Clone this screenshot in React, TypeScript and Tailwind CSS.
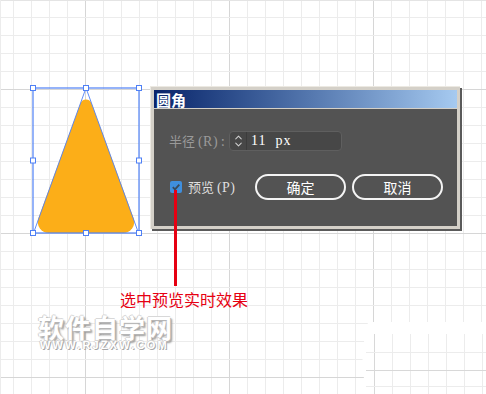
import { ChevronUp, ChevronDown } from "lucide-react";

const CJK = "font-['Noto_Sans_CJK_SC','Noto_Sans',sans-serif]";
// Latin-first stack: tighter line metrics, CJK glyphs still come from Noto
const CJK_TIGHT = "font-['Liberation_Sans','Noto_Sans_CJK_SC',sans-serif]";

// canvas grid: 18px cells, darker line every 8 cells
const xs = Array.from({ length: 28 }, (_, i) => 13.5 + i * 18);
const ys = Array.from({ length: 22 }, (_, i) => 17.5 + i * 18);

function Canvas() {
  const handles: [number, number][] = [
    [33, 88], [86, 88], [139, 88],
    [33, 160.5], [139, 160.5],
    [33, 233], [86, 233], [139, 233],
  ];
  return (
    <svg className="absolute inset-0" width={486} height={394} viewBox="0 0 486 394">
      <rect width={486} height={394} fill="#fff" />
      {xs.map((x, i) => (
        <line key={"x" + i} x1={x} y1={0} x2={x} y2={394} stroke={i % 8 === 4 ? "#d6d6d6" : "#ececec"} />
      ))}
      {ys.map((y, i) => (
        <line key={"y" + i} x1={0} y1={y} x2={486} y2={y} stroke={i % 8 === 4 ? "#d6d6d6" : "#ececec"} />
      ))}
      <line x1={0} y1={0.5} x2={486} y2={0.5} stroke="#e4e4e4" />
      <line x1={0.5} y1={0} x2={0.5} y2={394} stroke="#ececec" />

      {/* erased patch, bottom right */}
      <path d="M368 322 L486 322 L486 394 L370 394 L364 380 L362 352 Z" fill="#fff" />
      {[374.5, 392.5, 410.5, 428.5, 446.5, 464.5, 482.5].map((x, i) => (
        <line key={"px" + i} x1={x} y1={334} x2={x} y2={394} stroke={i === 0 ? "#d8d8d8" : "#ececec"} />
      ))}
      {[352.5, 370.5, 386.5].map((y, i) => (
        <line key={"py" + i} x1={366} y1={y} x2={486} y2={y} stroke={i === 1 ? "#d8d8d8" : "#ececec"} />
      ))}

      {/* rounded triangle */}
      <path
        d="M91.6 103.4 L133.6 218.3 A11 11 0 0 1 123.3 233 L48.7 233 A11 11 0 0 1 38.4 218.3 L80.4 103.4 A6 6 0 0 1 91.6 103.4 Z"
        fill="#fcae18"
      />
      <path d="M86 88 L33.5 233 M86 88 L138.5 233" stroke="#4f80f5" strokeWidth={0.9} fill="none" />
      <rect x={33} y={88} width={106} height={145} fill="none" stroke="#4f80f5" strokeWidth={1.2} />
      {handles.map(([x, y], i) => (
        <rect key={i} x={x - 2.5} y={y - 2.5} width={5} height={5} fill="#fff" stroke="#4f80f5" strokeWidth={1} />
      ))}
    </svg>
  );
}

function Dialog() {
  return (
    <div className="absolute left-[150px] top-[86px] w-[310px] h-[143px] bg-[#d4d0c8] p-[3px] flex flex-col border-t border-l border-[#ece9e2] shadow-[2px_2px_0_#5a5a5a]">
      <div className="h-[18px] shrink-0 flex items-center px-[2px] bg-gradient-to-r from-[#0a246a] to-[#a6caf0]">
        <span className={`${CJK} text-[15px] leading-none font-bold text-white`}>圆角</span>
      </div>
      <div className="mt-px flex-1 bg-[#535353] pl-[15px] pt-[22px] flex flex-col">
        <div className="flex items-center">
          <span className={`${CJK} w-[60px] text-[13px] leading-none text-[#9a9a9a]`}>
            半径 <span className="font-['Liberation_Serif',serif] text-[14px] tracking-[0.5px]">(R)</span> :
          </span>
          <div className="w-[113px] h-[20px] flex rounded-sm border border-[#5f5f5f] bg-[#474747]">
            <div className="w-[17px] flex flex-col items-center justify-center border-r border-[#3c3c3c] text-[#d0d0d0]">
              <ChevronUp size={11} strokeWidth={2.2} className="-mb-[2px]" />
              <ChevronDown size={11} strokeWidth={2.2} className="-mt-[2px]" />
            </div>
            <span className="pl-[4px] flex items-center text-[14px] leading-none text-white font-['Liberation_Serif',serif] tracking-[1px] whitespace-pre">
              11  px
            </span>
          </div>
        </div>
        <div className="mt-[23px] flex items-center">
          <div className="w-[86px] pl-px flex items-center gap-[6px]">
            <span className="w-[12px] h-[12px] rounded-[2px] bg-[#3f8fde] flex items-center justify-center">
              <svg width="10" height="10" viewBox="0 0 10 10">
                <path d="M1.8 5.2 L4 7.4 L8.3 2.6" stroke="#3a4a5a" strokeWidth={1.8} fill="none" />
              </svg>
            </span>
            <span className={`${CJK} text-[13px] leading-none text-[#dedede]`}>
              预览 <span className="font-['Liberation_Serif',serif] text-[14px] tracking-[0.5px]">(P)</span>
            </span>
          </div>
          <div className="flex gap-[6px]">
            {["确定", "取消"].map((t) => (
              <button
                key={t}
                className={`${CJK} w-[91px] h-[26px] rounded-full border-2 border-[#f4f4f4] text-[14px] leading-none text-white flex items-center justify-center`}
              >
                {t}
              </button>
            ))}
          </div>
        </div>
      </div>
    </div>
  );
}

export default function App() {
  return (
    <div className="relative w-[486px] h-[394px] overflow-hidden bg-white">
      <Canvas />
      <Dialog />

      {/* annotation */}
      <div className="absolute left-[174px] top-[190px] w-[3px] h-[96px] bg-[#e60012]" />
      <div className={`absolute left-[120px] top-[292px] ${CJK_TIGHT} text-[16px] leading-[18px] text-[#e60012]`}>
        选中预览实时效果
      </div>

      {/* watermark */}
      <div className="absolute left-[38px] top-[316px] flex flex-col items-start">
        <span className={`${CJK_TIGHT} text-[26px] leading-[26px] font-bold tracking-[1px] text-white [text-shadow:1px_1px_0_#b5b5b5,-1px_0_0_#d0d0d0,0_-1px_0_#d8d8d8,2px_2px_2px_#9a9a9a]`}>
          软件自学网
        </span>
        <span className="mt-[-2px] ml-[2px] font-['Liberation_Sans',sans-serif] text-[11px] leading-[11px] font-bold tracking-[2.2px] text-white [text-shadow:1px_1px_0_#a8a8a8,-1px_0_0_#cfcfcf,0_-1px_0_#d6d6d6]">
          WWW.RJZXW.COM
        </span>
      </div>
    </div>
  );
}
